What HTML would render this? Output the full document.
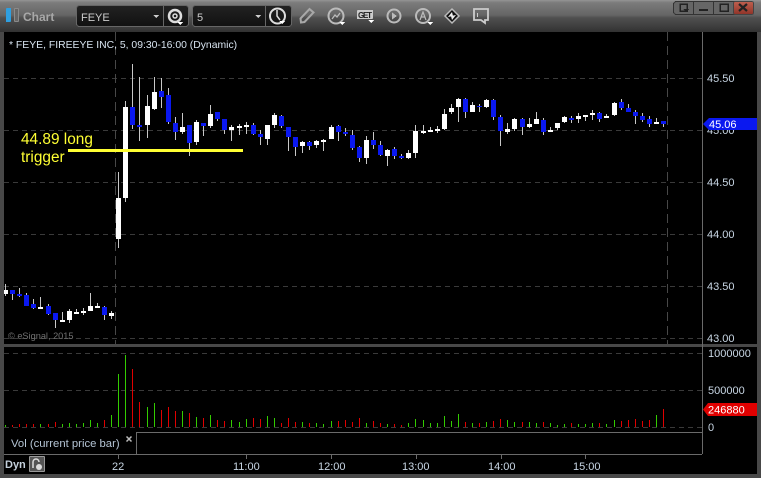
<!DOCTYPE html>
<html><head><meta charset="utf-8"><style>
html,body{margin:0;padding:0;background:#000;width:761px;height:478px;overflow:hidden}
svg{display:block}
text{font-family:"Liberation Sans",sans-serif}
</style></head><body>
<svg width="761" height="478" viewBox="0 0 761 478" xmlns="http://www.w3.org/2000/svg" shape-rendering="crispEdges">
<defs>
<linearGradient id="g" x1="0" y1="0" x2="0" y2="1"><stop offset="0" stop-color="#959595"/><stop offset=".08" stop-color="#7c7c7c"/><stop offset=".48" stop-color="#646464"/><stop offset=".55" stop-color="#505050"/><stop offset="1" stop-color="#323232"/></linearGradient>
<linearGradient id="r" x1="0" y1="0" x2="0" y2="1"><stop offset="0" stop-color="#c0604f"/><stop offset="1" stop-color="#8f3328"/></linearGradient>
<linearGradient id="b" x1="0" y1="0" x2="0" y2="1"><stop offset="0" stop-color="#222"/><stop offset="1" stop-color="#111"/></linearGradient>
</defs>
<rect width="761" height="478" fill="#484848"/>
<rect width="761" height="32" fill="url(#g)"/>
<rect x="4" y="32" width="753" height="442" fill="#000"/>
<rect x="0" y="344" width="761" height="3" fill="#484848"/>

<!-- title bar -->
<rect x="6" y="8" width="5" height="14" rx="1" fill="#2f9fe0"/>
<rect x="14.500" y="8.500" width="4" height="13" rx="1" fill="#666" stroke="#8a8a8a" stroke-width="1"/>
<text x="23" y="21" font-size="12" font-weight="bold" fill="#a8a8a8">Chart</text>
<rect x="76.500" y="5.500" width="112" height="21" rx="3" fill="url(#b)" stroke="#666"/>
<path d="M163.500 6V26" stroke="#666"/>
<text x="81" y="21" font-size="11" fill="#ccc">FEYE</text>
<path d="M153 15h6l-3 3z" fill="#ccc"/>
<g shape-rendering="auto" fill="none" stroke="#ddd">
<circle cx="175" cy="16" r="6" stroke-width="2.500"/><circle cx="175" cy="16" r="2" stroke-width="1.500"/>
</g>
<path d="M177 22h6l-3 3z" fill="#fff"/>
<rect x="192.500" y="5.500" width="99" height="21" rx="3" fill="url(#b)" stroke="#666"/>
<path d="M265.500 6V26" stroke="#666"/>
<text x="197" y="21" font-size="11" fill="#ccc">5</text>
<path d="M255 15h6l-3 3z" fill="#ccc"/>
<g shape-rendering="auto" fill="none" stroke="#ddd" stroke-width="2">
<circle cx="277.500" cy="16" r="7.500"/><path d="M277 10v6l3 4" stroke-width="1.500"/>
<path d="M301 22.500l-.5-4 9-9.500 4 3.500-9 9.500z" stroke="#a8a8a8"/>
<circle cx="336" cy="16" r="7.500" stroke="#bbb"/><path d="M332 19l3-4 2 2 3-4" stroke="#bbb" stroke-width="1.300"/>
<circle cx="394" cy="16" r="6.500" stroke="#bbb"/>
<circle cx="423" cy="16" r="7" stroke="#bbb"/><path d="M420 20l3-8 3 8M421 17h4" stroke="#bbb" stroke-width="1.200"/>
<path d="M445 16l7-7 7 7-7 7z" fill="#111" stroke="#bbb" stroke-width="1.500"/>
<path d="M474 9h14v11h-3v3l-4-3h-7z" stroke="#ccc" stroke-width="1.800"/><path d="M477.500 13v4" stroke="#ccc" stroke-width="1"/>
</g>
<path d="M392 12.500l5 3.500-5 3.500z" fill="#bbb"/>
<path d="M339 22h6l-3 3zM368 20h6l-3 3zM427 22h6l-3 3zM279 21h6l-3 3z" fill="#fff"/>
<path d="M448 17l4-5 1 4zM456 15l-4 5-1-4z" fill="#eee" shape-rendering="auto"/>
<rect x="357" y="10" width="16" height="9" rx="1" fill="#ccc"/>
<text x="358" y="18" font-size="8" font-weight="bold" fill="#222" textLength="14">GET</text>

<!-- window buttons -->
<rect x="673.500" y="1.500" width="80" height="13" rx="3" fill="#666" stroke="#333"/>
<rect x="733.500" y="1.500" width="20" height="13" rx="2" fill="url(#r)" stroke="#444"/>
<path d="M693.500 2V14M713.500 2V14" stroke="#333"/>
<rect x="680" y="4" width="7" height="7" fill="none" stroke="#222" stroke-width="1.500"/>
<path d="M683 9h6l-3 3z" fill="#222"/>
<rect x="699" y="9" width="9" height="2" fill="#222"/>
<rect x="720" y="4" width="8" height="7" fill="none" stroke="#222" stroke-width="1.500"/>
<path d="M739 4l8 7M747 4l-8 7" stroke="#222" stroke-width="2.200" shape-rendering="auto"/>

<!-- grid -->
<path d="M4 78.500H702M4 130.500H702M4 182.500H702M4 234.500H702M4 286.500H702M4 338.500H702M4 353.500H702M4 390.500H702M4 427.500H702" stroke="#3a3a3a" stroke-dasharray="5 4"/>
<path d="M115.500 32V344M667.500 32V344" stroke="#484848" stroke-dasharray="9 5"/>
<path d="M702.500 32V454M136 432.500H702M136.500 432V454M4 454.500H702" stroke="#6a6a6a"/>
<path d="M118.500 454V459M246.500 454V459M331.500 454V459M416.500 454V459M501.500 454V459M585.500 454V459" stroke="#6a6a6a"/>

<!-- candle wicks -->
<path stroke="#c8c8c8" fill="none" d="M5.500 284V296M12.500 290V300M19.500 288V297M26.500 293V306M33.500 299V309M40.500 297V309M48.500 304V315M55.500 313V328M62.500 312V322M69.500 309V323M76.500 309V314M83.500 308V315M90.500 293V311M97.500 303V308M104.500 306V320M111.500 311V319M118.500 172V248M125.500 101V202M132.500 64V129M139.500 77V141M147.500 95V138M154.500 77V110M161.500 78V108M168.500 88V124M175.500 117V140M182.500 113V134M189.500 125V156M196.500 120V145M203.500 123V136M210.500 105V128M217.500 112V121M224.500 119V134M231.500 125V141M239.500 124V135M246.500 122V134M253.500 123V135M260.500 130V145M267.500 125V145M274.500 113V128M281.500 115V128M288.500 127V151M295.500 137V156M302.500 141V153M309.500 141V150M316.500 140V148M323.500 139V151M331.500 125V139M338.500 125V141M345.500 128V136M352.500 130V150M359.500 146V162M366.500 136V164M373.500 132V149M380.500 141V156M387.500 149V166M394.500 147V159M401.500 154V159M408.500 150V159M415.500 125V158M423.500 125V134M430.500 127V132M437.500 126V133M444.500 109V130M451.500 104V114M458.500 98V122M465.500 98V118M472.500 102V112M479.500 104V112M486.500 99V108M493.500 99V120M500.500 115V146M507.500 123V134M514.500 118V131M522.500 118V135M529.500 118V128M536.500 112V124M543.500 118V135M550.500 127V132M557.500 123V130M564.500 116V123M571.500 116V123M578.500 113V123M585.500 115V121M592.500 110V120M599.500 112V122M606.500 114V118M614.500 102V116M621.500 99V110M628.500 104V112M635.500 110V124M642.500 113V122M649.500 116V127M656.500 118V124M663.500 121V127"/>
<!-- white bodies -->
<rect x="4" y="290" width="4" height="4" fill="#fff"/>
<path stroke="#fff" stroke-width="5" fill="none" d="M40.500 307V309M62.500 320V322M69.500 311V320M76.500 312V314M83.500 311V313M90.500 306V311M97.500 306V308M111.500 313V316M118.500 198V239M125.500 107V198M147.500 106V125M154.500 92V109M182.500 127V132M196.500 122V142M210.500 114V126M231.500 127V130M239.500 126V128M246.500 125V127M267.500 125V139M274.500 115V125M302.500 142V146M316.500 141V145M323.500 140V142M331.500 127V139M366.500 140V158M387.500 150V156M408.500 153V158M415.500 131V153M423.500 131V133M430.500 130V132M437.500 129V131M444.500 114V129M451.500 108V112M458.500 99V107M472.500 105V112M486.500 100V107M507.500 129V132M514.500 119V129M529.500 124V127M536.500 119V124M550.500 130V132M557.500 123V128M564.500 117V122M578.500 116V119M585.500 115V117M592.500 113V115M606.500 116V118M614.500 103V115M656.500 122V124"/>
<!-- blue bodies -->
<path stroke="#0a18f0" stroke-width="5" fill="none" d="M12.500 290V294M19.500 294V296M26.500 295V306M33.500 304V308M48.500 306V314M55.500 313V320M104.500 307V315M132.500 107V125M139.500 125V127M161.500 91V97M168.500 95V122M175.500 123V132M189.500 125V143M203.500 123V126M217.500 112V119M224.500 119V130M253.500 125V134M260.500 134V137M281.500 116V126M288.500 127V137M295.500 137V147M309.500 142V146M338.500 126V132M345.500 132V134M352.500 135V148M359.500 147V158M373.500 140V145M380.500 145V155M394.500 149V156M401.500 156V158M465.500 99V112M479.500 106V107M493.500 100V117M500.500 117V131M522.500 119V127M543.500 120V132M571.500 118V120M599.500 113V119M621.500 102V108M628.500 108V112M635.500 112V116M642.500 116V120M649.500 119V124M663.500 121V124"/>

<!-- trigger -->
<rect x="68" y="149" width="175" height="3" fill="#ffff33"/>
<text x="21" y="144" font-size="15.400" fill="#ffff33">44.89 long</text>
<text x="21" y="162" font-size="15.400" fill="#ffff33">trigger</text>

<!-- volume -->
<path stroke="#33cc00" fill="none" d="M5.500 427V425M40.500 427V424M62.500 427V424M69.500 427V423M76.500 427V424M83.500 427V423M90.500 427V420M97.500 427V423M111.500 427V415M118.500 427V374M125.500 427V355M147.500 427V407M154.500 427V403M182.500 427V411M196.500 427V417M210.500 427V415M231.500 427V420M239.500 427V422M246.500 427V419M267.500 427V416M274.500 427V418M302.500 427V422M316.500 427V423M323.500 427V424M331.500 427V421M366.500 427V423M387.500 427V424M408.500 427V423M415.500 427V419M423.500 427V420M430.500 427V423M437.500 427V423M444.500 427V416M451.500 427V421M458.500 427V414M472.500 427V423M486.500 427V422M507.500 427V420M514.500 427V422M529.500 427V422M536.500 427V423M550.500 427V423M557.500 427V425M564.500 427V424M578.500 427V424M585.500 427V424M592.500 427V423M606.500 427V424M614.500 427V420M656.500 427V415"/>
<path stroke="#e00000" fill="none" d="M12.500 427V425M19.500 427V424M26.500 427V424M33.500 427V424M48.500 427V424M55.500 427V422M104.500 427V420M132.500 427V369M139.500 427V402M161.500 427V410M168.500 427V407M175.500 427V411M189.500 427V413M203.500 427V418M217.500 427V420M224.500 427V421M253.500 427V418M260.500 427V419M281.500 427V423M288.500 427V418M295.500 427V422M309.500 427V423M338.500 427V421M345.500 427V420M352.500 427V422M359.500 427V418M373.500 427V421M380.500 427V423M394.500 427V424M401.500 427V425M465.500 427V422M479.500 427V423M493.500 427V421M500.500 427V419M522.500 427V422M543.500 427V422M571.500 427V423M599.500 427V423M621.500 427V421M628.500 427V420M635.500 427V419M642.500 427V421M649.500 427V420M663.500 427V409"/>

<!-- labels -->
<g font-size="11" fill="#c8d6e4">
<text x="9" y="48" font-size="10.400" fill="#d8e4f0">* FEYE, FIREEYE INC, 5, 09:30-16:00 (Dynamic)</text>
<text x="707" y="82">45.50</text>
<text x="707" y="134">45.00</text>
<text x="707" y="186">44.50</text>
<text x="707" y="238">44.00</text>
<text x="707" y="290">43.50</text>
<text x="707" y="342">43.00</text>
<text x="708" y="357">1000000</text>
<text x="708" y="394">500000</text>
<text x="708" y="431">0</text>
<text x="11" y="447" font-size="11.300" fill="#b4c4d4">Vol (current price bar)</text>
<text x="112" y="470">22</text>
<text x="233" y="470">11:00</text>
<text x="318" y="470">12:00</text>
<text x="402" y="470">13:00</text>
<text x="488" y="470">14:00</text>
<text x="573" y="470">15:00</text>
</g>
<text x="8" y="339" font-size="9.200" fill="#707070">© eSignal, 2015</text>
<path d="M126.500 436.500l5 5M131.500 436.500l-5 5" stroke="#bbb" stroke-width="1.500" shape-rendering="auto"/>
<text x="5" y="468" font-size="11" font-weight="bold" fill="#c4d0dc">Dyn</text>
<rect x="29.500" y="456.500" width="15" height="15" rx="1" fill="#555" stroke="#999"/>
<path d="M33 468v-6a3 3 0 0 1 6 0" fill="none" stroke="#ddd" stroke-width="1.500" shape-rendering="auto"/>
<circle cx="39" cy="467" r="3" fill="#ddd" shape-rendering="auto"/>

<!-- value tags -->
<path d="M703 124l6-6H757V130H709z" fill="#0a18f0" shape-rendering="auto"/>
<text x="709" y="128" font-size="11" fill="#fff">45.06</text>
<path d="M703 409.500l5-6.500H757V416H708z" fill="#e00000" shape-rendering="auto"/>
<text x="708" y="413.500" font-size="11" fill="#fff">246880</text>
</svg>
</body></html>
